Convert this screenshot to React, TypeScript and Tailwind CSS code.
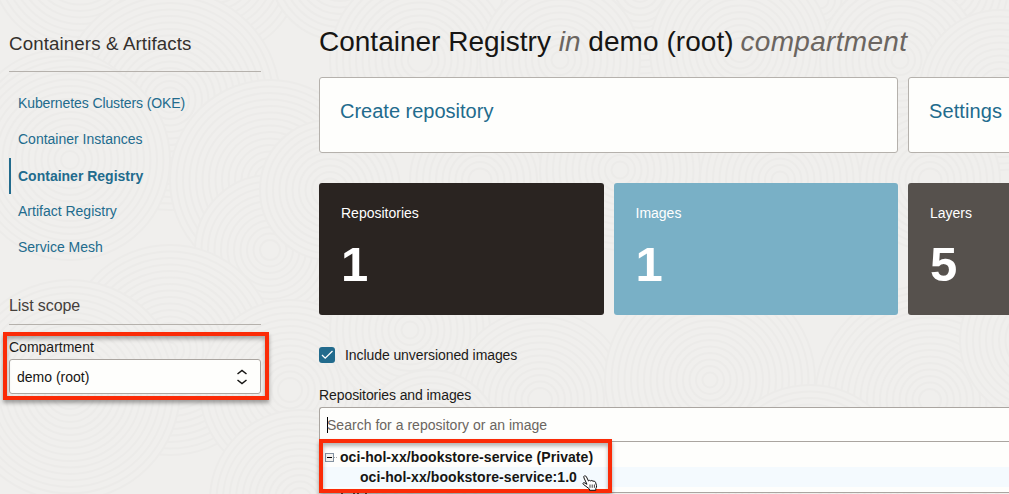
import React from "react";

const circles = [
  [80, -40, 90], [215, -30, 85], [340, -30, 70], [490, 0, 90], [640, -10, 90], [820, 0, 80], [950, -10, 90],
  [170, 100, 110], [60, 140, 90], [270, 180, 100], [420, 60, 90], [560, 60, 80], [740, 50, 90], [900, 60, 80], [1000, 90, 80],
  [70, 160, 100], [270, 250, 75], [330, 190, 70], [480, 180, 70], [620, 170, 80], [780, 180, 80], [930, 180, 70],
  [170, 350, 105], [290, 390, 90], [410, 330, 80], [540, 400, 90], [930, 400, 115], [1040, 340, 80], [710, 380, 105],
  [70, 390, 110], [300, 500, 90], [430, 440, 70], [810, 480, 95],
];

function Texture() {
  return (
    <svg className="absolute inset-0" width="1009" height="494" aria-hidden="true">
      {circles.map(([cx, cy, r], i) => (
        <g key={i} fill="none" stroke="#ecebe9" strokeWidth="2">
          <circle cx={cx} cy={cy} r={r} fill="#f0efed" stroke="none" />
          {Array.from({ length: Math.floor(r / 6.5) }, (_, k) => (
            <circle key={k} cx={cx} cy={cy} r={r - k * 6.5} />
          ))}
        </g>
      ))}
    </svg>
  );
}

const links = ["Kubernetes Clusters (OKE)", "Container Instances", "Container Registry", "Artifact Registry", "Service Mesh"];

function Sidebar() {
  return (
    <aside className="w-[252px] shrink-0">
      <h2 className="h-[72px] border-b border-[#b5b1ac] pt-[30px] text-[18.7px] leading-[27px] tracking-[0.13px] text-[#34302d]">
        Containers &amp; Artifacts
      </h2>
      <nav className="mt-[13px] text-sm text-[#226b8d]">
        {links.map((l) => (
          <div
            key={l}
            className={
              l === "Container Registry"
                ? "mt-px -mb-px flex h-9 items-center border-l-2 border-[#226b8d] pl-[7px] font-bold"
                : l === "Kubernetes Clusters (OKE)"
                  ? "flex h-9 items-center pl-[9px] tracking-[-0.1px]"
                  : "flex h-9 items-center pl-[9px]"
            }
          >
            {l}
          </div>
        ))}
      </nav>
      <h3 className="mt-[28px] h-[32px] border-b border-[#b5b1ac] pt-px text-base leading-6 tracking-[-0.1px] text-[#45403c]">List scope</h3>
      <div className="relative">
        <label className="block pt-3 text-sm leading-5 text-[#1c1a18]">Compartment</label>
        <div className="mt-[2px] flex h-[35px] items-center justify-between rounded-[3px] border border-[#aaa5a0] bg-[#fefefc] pl-[7px] pr-3 text-sm text-[#161513]">
          demo (root)
          <svg width="12" height="16" viewBox="0 0 12 16" fill="none" stroke="#161513" strokeWidth="1.5">
            <path d="M1.500 5 6 1.500l4.500 3.500M1.500 11 6 14.500l4.500-3.500" />
          </svg>
        </div>
        <div className="absolute -left-[6px] top-[7px] h-[68px] w-[266px] border-4 border-[#fb2b07] shadow-[0_3px_4px_rgba(0,0,0,0.35),inset_0_3px_4px_rgba(0,0,0,0.3)]" />
      </div>
    </aside>
  );
}

function Stat({ label, value, className }: { label: string; value: number; className: string }) {
  return (
    <div className={`h-[132px] shrink-0 rounded-[3px] pt-5 text-white ${className}`}>
      <div className="text-sm leading-5">{label}</div>
      <div className="mt-[14px] text-[49px] font-bold leading-[54px]">{value}</div>
    </div>
  );
}

function Cursor() {
  return (
    <svg
      className="absolute left-[262px] top-[33px]"
      width="16"
      height="16"
      viewBox="0 0 16 16"
      fill="#fff"
      stroke="#111"
      strokeWidth="1"
      strokeLinejoin="round"
    >
      <path d="M5 9.300 2 3Q1.300 1.200 2.500.8 3.700.5 4.500 2L6.500 6Q7.300 4.800 8.700 5.900 9.800 4.900 11 6.200 12.500 5.400 13.500 7.300L14.500 10.500Q14.800 12.300 13.800 13.500V15.300H7.500V14L1.300 9.300Q.5 8.200 1.500 7.700 2.500 7.400 5 9.300Z" />
      <path d="M8 9.500v3.300M10.200 9.500v3.300M12.400 9.500v3.300" strokeWidth="0.8" />
    </svg>
  );
}

export default function App() {
  return (
    <div className="relative h-[494px] w-[1009px] overflow-hidden bg-[#f0efed] font-['Liberation_Sans',Arial,sans-serif]">
      <Texture />
      <div className="relative flex gap-[58px] pl-[9px]">
        <Sidebar />
        <main className="w-[690px] shrink-0">
          <h1 className="h-[77px] whitespace-nowrap pt-[24px] text-[28px] leading-9 text-[#161513]">
            Container Registry <em className="text-[#6b6560]">in</em> <span className="tracking-[0.07px]">demo (root)</span>{" "}
            <em className="-ml-px tracking-[0.3px] text-[#6b6560]">compartment</em>
          </h1>
          <div className="flex gap-[10px] text-xl leading-6 text-[#226b8d]">
            <div className="h-[76px] w-[579px] shrink-0 rounded-[3px] border border-[#b5b1ac] bg-[#fefefc] pl-5 pt-[21px]">Create repository</div>
            <div className="h-[76px] w-[285px] shrink-0 rounded-[3px] border border-[#b5b1ac] bg-[#fefefc] pl-5 pt-[21px] tracking-[0.1px]">Settings</div>
          </div>
          <div className="mt-[30px] flex gap-[10px]">
            <Stat label="Repositories" value={1} className="w-[285px] bg-[#2a2421] pl-[22px]" />
            <Stat label="Images" value={1} className="w-[284px] bg-[#79b0c6] pl-[21.5px]" />
            <Stat label="Layers" value={5} className="w-[285px] bg-[#56514d] pl-[22px]" />
          </div>
          <div className="mt-[30px] flex h-5 items-center text-sm tracking-[-0.08px] text-[#1c1a18]">
            <span className="mr-[10px] flex size-4 items-center justify-center rounded-[3px] bg-[#226b8d]">
              <svg width="12" height="10" viewBox="0 0 12 10" fill="none" stroke="#fff" strokeWidth="1.3"><path d="m1 5 3.200 3.200L11.500 1" /></svg>
            </span>
            Include unversioned images
          </div>
          <div className="mt-5 text-sm leading-5 tracking-[-0.08px] text-[#1c1a18]">Repositories and images</div>
          <div className="mt-[2px] flex h-[34px] w-[700px] items-center rounded-tl-[3px] border-l border-t border-[#aaa5a0] bg-[#fefefc] pl-[7px] text-sm tracking-[0.02px] text-[#6b6560]">
            <span className="-mr-px h-[16px] w-px bg-black" />
            Search for a repository or an image
          </div>
          <div className="relative h-[52px] w-[700px] border border-[#aaa5a0] bg-[#fefefc] pt-[5px] text-sm font-bold tracking-[0.07px] text-[#161513]">
            <div className="flex h-5 items-center pl-[5px]">
              <span className="flex size-[9px] items-center justify-center border border-[#8392a1] bg-[#f3f1ed]"><i className="h-px w-[5px] bg-black" /></span>
              <span className="mr-[3px] w-[3px] border-t border-dotted border-[#aaa]" />
              oci-hol-xx/bookstore-service (Private)
            </div>
            <div className="flex h-5 items-center bg-[#f4fafe] pl-[40px]">oci-hol-xx/bookstore-service:1.0</div>
            <div className="absolute -left-px -top-[3px] h-[54px] w-[293px] border-4 border-[#fb2b07] shadow-[0_3px_4px_rgba(0,0,0,0.35),inset_0_3px_4px_rgba(0,0,0,0.3)]" />
            <Cursor />
            <svg className="absolute left-[20px] top-[51px]" width="32" height="1" fill="#4a2f29">
              <path d="M1 0h2v1H1zM13 0h2v1h-2zM17 0h2v1h-2zM25 0h2v1h-2z" />
            </svg>
          </div>
        </main>
      </div>
    </div>
  );
}
